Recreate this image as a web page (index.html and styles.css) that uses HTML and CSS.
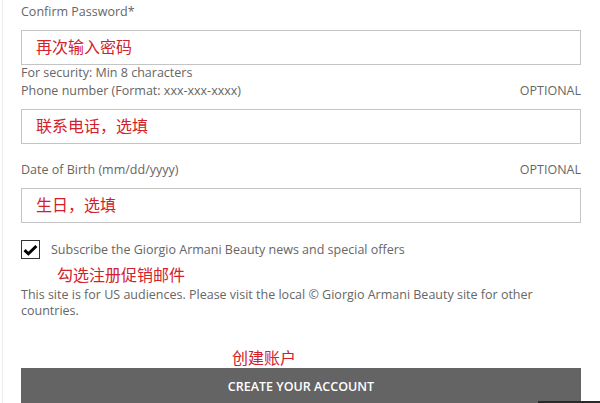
FILE: index.html
```html
<!doctype html>
<html lang="en">
<head>
    <meta charset="UTF-8">
    <title>Create Account</title>
    <link rel="stylesheet" href="styles.css">
</head>
<body>

<div class="page">
    <form class="account-form">
        <div class="field">
            <div class="field-head">
                <label for="confirm">Confirm Password*</label>
            </div>
            <input id="confirm" class="field-input" type="text" placeholder="再次输入密码">
            <div class="field-hint">For security: Min 8 characters</div>
        </div>

        <div class="field field-phone">
            <div class="field-head">
                <label for="phone">Phone number (Format: xxx-xxx-xxxx)</label>
                <span class="optional">OPTIONAL</span>
            </div>
            <input id="phone" class="field-input" type="text" placeholder="联系电话，选填">
        </div>

        <div class="field field-birth">
            <div class="field-head">
                <label for="birth">Date of Birth (mm/dd/yyyy)</label>
                <span class="optional">OPTIONAL</span>
            </div>
            <input id="birth" class="field-input" type="text" placeholder="生日，选填">
        </div>

        <label class="subscribe">
            <span class="checkbox">
                <svg width="15" height="12" viewBox="0 0 15 12">
                    <path d="M1.5 6.2 L5.4 9.8 L13.4 2" fill="none" stroke="#000" stroke-width="3"/>
                </svg>
            </span>
            <span class="subscribe-text">Subscribe the Giorgio Armani Beauty news and special offers</span>
        </label>
        <div class="note note-subscribe">勾选注册促销邮件</div>

        <p class="notice">This site is for US audiences. Please visit the local &copy; Giorgio Armani Beauty site for other countries.</p>

        <div class="note note-submit">创建账户</div>
        <button class="submit" type="button">CREATE YOUR ACCOUNT</button>
    </form>
</div>

<div class="corner-bar"></div>

</body>
</html>
```

FILE: styles.css
```css
body {
    margin: 0;
    font: 12.5px/16px "Open Sans", "Liberation Sans", sans-serif;
    color: #666;
    background: #fff;
    overflow: hidden;
}

.page {
    margin-left: 2px;
    border-left: 1px solid #ececec;
    padding: 4px 19px 0 18px;
    height: 403px;
    box-sizing: border-box;
}

.field-head {
    display: flex;
    justify-content: space-between;
    line-height: 16px;
}

.field-input {
    display: block;
    width: 100%;
    height: 35px;
    box-sizing: border-box;
    margin: 10px 0 0;
    padding: 0 14px 3px;
    border: 1px solid #c4c4c4;
    border-radius: 0;
    font: 16px "Noto Sans CJK SC", sans-serif;
    outline: none;
}

.field-input::placeholder {
    color: #d3212b;
    opacity: 1;
}

.field-hint {
    line-height: 15px;
}

.field-phone {
    margin-top: 3px;
}

.field-birth {
    margin-top: 18px;
}

.subscribe {
    display: flex;
    align-items: center;
    margin-top: 17px;
    height: 19px;
}

.checkbox {
    width: 19px;
    height: 19px;
    box-sizing: border-box;
    border: 1px solid #333;
    display: flex;
    align-items: center;
    justify-content: center;
    margin-right: 11px;
}

.note {
    font: 16px/20px "Noto Sans CJK SC", sans-serif;
    color: #d3212b;
}

.note-subscribe {
    margin: 5px 0 0 36px;
}

.notice {
    margin: 3px 0 0;
    line-height: 16px;
}

.note-submit {
    margin: 28px 0 0 211px;
}

.submit {
    display: block;
    width: 100%;
    height: 37px;
    margin-top: 1px;
    border: 0;
    background: #646464;
    color: #fff;
    font: 600 12.5px "Open Sans", sans-serif;
    padding: 0;
}

.corner-bar {
    position: absolute;
    right: 0;
    bottom: 0;
    width: 62px;
    height: 2px;
    background: #2a2a2a;
}
```
